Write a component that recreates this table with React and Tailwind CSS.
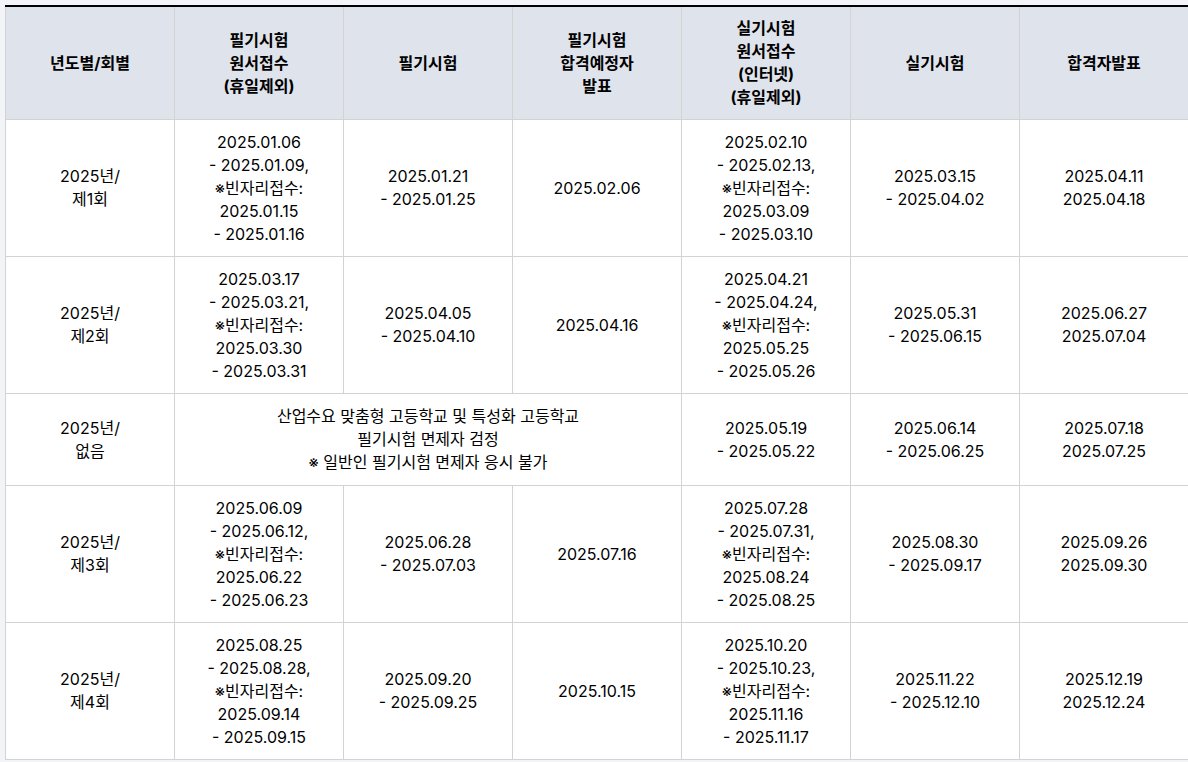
import React from "react";

const headers = [
  ["년도별/회별"],
  ["필기시험", "원서접수", "(휴일제외)"],
  ["필기시험"],
  ["필기시험", "합격예정자", "발표"],
  ["실기시험", "원서접수", "(인터넷)", "(휴일제외)"],
  ["실기시험"],
  ["합격자발표"],
];

const rows = [
  {
    round: ["2025년/", "제1회"],
    apply: ["2025.01.06", "- 2025.01.09,", "※빈자리접수:", "2025.01.15", "- 2025.01.16"],
    written: ["2025.01.21", "- 2025.01.25"],
    pass: ["2025.02.06"],
    practicalApply: ["2025.02.10", "- 2025.02.13,", "※빈자리접수:", "2025.03.09", "- 2025.03.10"],
    practical: ["2025.03.15", "- 2025.04.02"],
    result: ["2025.04.11", "2025.04.18"],
  },
  {
    round: ["2025년/", "제2회"],
    apply: ["2025.03.17", "- 2025.03.21,", "※빈자리접수:", "2025.03.30", "- 2025.03.31"],
    written: ["2025.04.05", "- 2025.04.10"],
    pass: ["2025.04.16"],
    practicalApply: ["2025.04.21", "- 2025.04.24,", "※빈자리접수:", "2025.05.25", "- 2025.05.26"],
    practical: ["2025.05.31", "- 2025.06.15"],
    result: ["2025.06.27", "2025.07.04"],
  },
  {
    round: ["2025년/", "없음"],
    note: ["산업수요 맞춤형 고등학교 및 특성화 고등학교", "필기시험 면제자 검정", "※ 일반인 필기시험 면제자 응시 불가"],
    practicalApply: ["2025.05.19", "- 2025.05.22"],
    practical: ["2025.06.14", "- 2025.06.25"],
    result: ["2025.07.18", "2025.07.25"],
  },
  {
    round: ["2025년/", "제3회"],
    apply: ["2025.06.09", "- 2025.06.12,", "※빈자리접수:", "2025.06.22", "- 2025.06.23"],
    written: ["2025.06.28", "- 2025.07.03"],
    pass: ["2025.07.16"],
    practicalApply: ["2025.07.28", "- 2025.07.31,", "※빈자리접수:", "2025.08.24", "- 2025.08.25"],
    practical: ["2025.08.30", "- 2025.09.17"],
    result: ["2025.09.26", "2025.09.30"],
  },
  {
    round: ["2025년/", "제4회"],
    apply: ["2025.08.25", "- 2025.08.28,", "※빈자리접수:", "2025.09.14", "- 2025.09.15"],
    written: ["2025.09.20", "- 2025.09.25"],
    pass: ["2025.10.15"],
    practicalApply: ["2025.10.20", "- 2025.10.23,", "※빈자리접수:", "2025.11.16", "- 2025.11.17"],
    practical: ["2025.11.22", "- 2025.12.10"],
    result: ["2025.12.19", "2025.12.24"],
  },
];

const Lines = ({ lines }) =>
  lines.map((l, i) => (
    <span key={i} className="block">
      {l}
    </span>
  ));

const cell = "border border-[#d3d3d3] px-2 text-center align-middle";
const td = `${cell} py-[10.5px]`;

const App = () => {
  return (
    <div
      className="min-h-[762px] bg-[#f3f4f7] pl-[5px] pt-[5px] text-[16px] leading-[23px] text-black"
      style={{ fontFamily: "Inter, 'Noto Sans CJK KR', sans-serif" }}
    >
      <table className="w-[1184px] table-fixed border-collapse bg-white">
        <thead>
          <tr className="bg-[#dfe3eb]">
            {headers.map((h, i) => (
              <th key={i} className={`${cell} py-[10px] border-t-2 border-t-black font-bold`}>
                <Lines lines={h} />
              </th>
            ))}
          </tr>
        </thead>
        <tbody>
          {rows.map((r, i) => (
            <tr key={i}>
              <td className={td}>
                <Lines lines={r.round} />
              </td>
              {r.note ? (
                <td colSpan={3} className={`${cell} py-[11px]`}>
                  <Lines lines={r.note} />
                </td>
              ) : (
                <>
                  <td className={td}>
                    <Lines lines={r.apply} />
                  </td>
                  <td className={td}>
                    <Lines lines={r.written} />
                  </td>
                  <td className={td}>
                    <Lines lines={r.pass} />
                  </td>
                </>
              )}
              <td className={td}>
                <Lines lines={r.practicalApply} />
              </td>
              <td className={td}>
                <Lines lines={r.practical} />
              </td>
              <td className={td}>
                <Lines lines={r.result} />
              </td>
            </tr>
          ))}
        </tbody>
      </table>
    </div>
  );
};

export default App;
